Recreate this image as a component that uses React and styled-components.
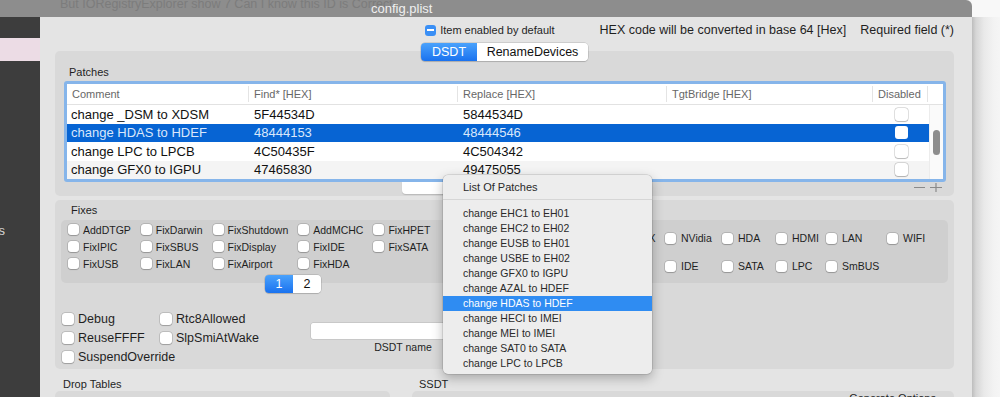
import React from "react";
import styled, { createGlobalStyle } from "styled-components";

const GlobalStyle = createGlobalStyle`
  html, body { margin: 0; padding: 0; background: #f6f6f6; }
  body { font-family: "Liberation Sans", Arial, sans-serif; color: #222; }
  * { box-sizing: border-box; }
`;

const patches = [
  { comment: "change _DSM to XDSM", find: "5F44534D", replace: "5844534D" },
  { comment: "change HDAS to HDEF", find: "48444153", replace: "48444546", selected: true },
  { comment: "change LPC to LPCB", find: "4C50435F", replace: "4C504342" },
  { comment: "change GFX0 to IGPU", find: "47465830", replace: "49475055" },
];

const leftFixes = [
  "AddDTGP", "FixDarwin", "FixShutdown", "AddMCHC", "FixHPET",
  "FixIPIC", "FixSBUS", "FixDisplay", "FixIDE", "FixSATA",
  "FixUSB", "FixLAN", "FixAirport", "FixHDA",
];

const rightFixes = [
  "IntelGFX", "NVidia", "HDA", "HDMI", "LAN", "WIFI",
  "Firewire", "IDE", "SATA", "LPC", "SmBUS",
];

const options = ["Debug", "Rtc8Allowed", "ReuseFFFF", "SlpSmiAtWake", "SuspendOverride"];

const menuItems = [
  "change EHC1 to EH01",
  "change EHC2 to EH02",
  "change EUSB to EH01",
  "change USBE to EH02",
  "change GFX0 to IGPU",
  "change AZAL to HDEF",
  "change HDAS to HDEF",
  "change HECI to IMEI",
  "change MEI to IMEI",
  "change SAT0 to SATA",
  "change LPC to LPCB",
];

const ssdtOptions = [
  { label: "DoubleFirstState", w: 123 },
  { label: "DropOem", w: 82 },
  { label: "EnableC2", w: 101 },
  { label: "EnableC4", w: 80 },
];

const Checkbox = ({ size = 11, gap = 4, fontSize = 10.5, children }) => (
  <CheckItem $gap={gap} $fs={fontSize}>
    <Box $size={size} />
    {children && <span>{children}</span>}
  </CheckItem>
);

const App = () => {
  return (
    <Screen>
      <GlobalStyle />
      <Main>
        <TitleBar>
          <GhostText>But IORegistryExplorer show 7 Can I know this ID is Correct</GhostText>
          <Title>config.plist</Title>
        </TitleBar>
        <Row>
          <Sidebar>
            <SideBand />
            <SideLabel>Devices</SideLabel>
          </Sidebar>
          <WindowBody>
            <TopRow>
              <MixedBox />
              <SmallText>Item enabled by default</SmallText>
              <InfoText $ml={45}>HEX code will be converted in base 64 [Hex]</InfoText>
              <InfoText $ml={14}>Required field (*)</InfoText>
            </TopRow>
            <Segmented>
              <Segment $active $w={56}>DSDT</Segment>
              <Segment $w={111}>RenameDevices</Segment>
            </Segmented>

            <PatchesBox>
              <GroupLabel>Patches</GroupLabel>
              <TableRing>
                <HeaderRow>
                  <HeadCell>Comment</HeadCell>
                  <HeadCell>Find* [HEX]</HeadCell>
                  <HeadCell>Replace [HEX]</HeadCell>
                  <HeadCell>TgtBridge [HEX]</HeadCell>
                  <HeadCell>Disabled</HeadCell>
                  <HeadCell $last />
                </HeaderRow>
                <TableBody>
                  <Rows>
                    {patches.map((p, i) => (
                      <PatchRow key={i} $selected={p.selected} $alt={i % 2 === 1}>
                        <Cell $pl={4}>{p.comment}</Cell>
                        <Cell>{p.find}</Cell>
                        <Cell>{p.replace}</Cell>
                        <Cell />
                        <CheckCell>
                          <Box $size={13} $flat={p.selected} />
                        </CheckCell>
                      </PatchRow>
                    ))}
                  </Rows>
                  <ScrollTrack>
                    <ScrollThumb />
                  </ScrollTrack>
                </TableBody>
              </TableRing>
              <BottomBar>
                <PopupButton />
                <PlusMinus>
                  <svg width="28" height="9" viewBox="0 0 28 9">
                    <path d="M0 4.5h11M16 4.5h12M22 -1.5v11" stroke="#8a8a8a" strokeWidth="1.2" fill="none" />
                  </svg>
                </PlusMinus>
              </BottomBar>
            </PatchesBox>

            <BigBox>
              <GroupLabel $ml={10}>Fixes</GroupLabel>
              <FixesBox>
                <LeftFixes>
                  {leftFixes.map((f) => (
                    <Checkbox key={f}>{f}</Checkbox>
                  ))}
                </LeftFixes>
                <RightFixes>
                  {rightFixes.map((f) => (
                    <Checkbox key={f} gap={5}>{f}</Checkbox>
                  ))}
                </RightFixes>
              </FixesBox>
              <Pager>
                <Segment $active $w={28}>1</Segment>
                <Segment $w={28}>2</Segment>
              </Pager>
              <LowerRow>
                <OptionsGrid>
                  {options.map((o) => (
                    <Checkbox key={o} size={12} gap={4} fontSize={12.5}>{o}</Checkbox>
                  ))}
                </OptionsGrid>
                <FieldGroup>
                  <TextField />
                  <FieldLabel>DSDT name</FieldLabel>
                </FieldGroup>
              </LowerRow>
            </BigBox>

            <SplitRow $mt={9}>
              <GroupLabel $ml={8} $mb={0}>Drop Tables</GroupLabel>
              <GroupLabel $ml={7} $mb={0}>SSDT</GroupLabel>
            </SplitRow>
            <SplitRow>
              <DropBox>
                <WhiteField />
              </DropBox>
              <SsdtBox>
                {ssdtOptions.map((o) => (
                  <SsdtItem key={o.label} $w={o.w}>
                    <Checkbox size={11} gap={5} fontSize={11}>{o.label}</Checkbox>
                  </SsdtItem>
                ))}
                <OptionsTitle>Generate Options</OptionsTitle>
              </SsdtBox>
            </SplitRow>
          </WindowBody>
        </Row>
      </Main>
      <ShadowEdge />

      <Menu>
        <MenuHeader>List Of Patches</MenuHeader>
        <MenuSeparator />
        {menuItems.map((m, i) => (
          <MenuItem key={m} $active={i === 6}>{m}</MenuItem>
        ))}
      </Menu>
    </Screen>
  );
};
export default App;

const Screen = styled.div`
  position: relative;
  width: 1000px;
  height: 397px;
  overflow: hidden;
  display: flex;
`;

const Main = styled.div`
  width: 972px;
  flex: none;
  display: flex;
  flex-direction: column;
`;

const ShadowEdge = styled.div`
  flex: 1;
  background: linear-gradient(#f8f8f8, #f8f8f8) top / 100% 17px no-repeat,
    linear-gradient(to right, #bdbdbd 0px, #d6d6d6 4px, #e9e9e9 12px, #f3f3f3 22px, #f5f5f5);
`;

const TitleBar = styled.div`
  flex: none;
  height: 17px;
  background: #8d8d8d;
  border-top-right-radius: 6px;
  display: grid;
  overflow: hidden;
`;

const GhostText = styled.span`
  grid-area: 1 / 1;
  margin: -3px 0 0 60px;
  font-size: 12.5px;
  color: #7c7c7c;
  white-space: nowrap;
`;

const Title = styled.span`
  grid-area: 1 / 1;
  margin-left: 371px;
  font-size: 13px;
  line-height: 17px;
  color: #f0f0f0;
  white-space: nowrap;
`;

const Row = styled.div`
  flex: 1;
  display: flex;
  min-height: 0;
`;

const Sidebar = styled.div`
  width: 40px;
  flex: none;
  background: #3d3d3d;
  display: flex;
  flex-direction: column;
  overflow: hidden;
  & > * { flex-shrink: 0; }
`;

const SideBand = styled.div`
  height: 23px;
  margin-top: 21px;
  background: #ecdce5;
`;

const SideLabel = styled.div`
  width: 5px;
  margin-top: 162px;
  display: flex;
  justify-content: flex-end;
  overflow: hidden;
  white-space: nowrap;
  font-size: 13px;
  color: #d6d6d6;
`;

const WindowBody = styled.div`
  flex: 1;
  background: #e4e4e4;
  padding: 6px 18px 0 15px;
  display: flex;
  flex-direction: column;
  overflow: hidden;
  & > * { flex-shrink: 0; }
`;

const TopRow = styled.div`
  height: 14px;
  display: flex;
  align-items: center;
  justify-content: flex-end;
  white-space: nowrap;
`;

const MixedBox = styled.span`
  position: relative;
  width: 11px;
  height: 11px;
  border-radius: 3px;
  background: #3a8ff5;
  margin-right: 4px;
  &::after {
    content: "";
    position: absolute;
    left: 2px;
    right: 2px;
    top: 4.5px;
    height: 2px;
    background: #fff;
  }
`;

const SmallText = styled.span`
  font-size: 11px;
  color: #1f1f1f;
`;

const InfoText = styled.span`
  margin-left: ${(p) => p.$ml}px;
  font-size: 12.5px;
  color: #1f1f1f;
`;

const Segmented = styled.div`
  position: relative;
  z-index: 1;
  align-self: center;
  margin-top: 6px;
  display: flex;
  height: 18px;
  border-radius: 4px;
  box-shadow: 0 0 0 0.5px rgba(0, 0, 0, 0.2), 0 1px 1px rgba(0, 0, 0, 0.12);
  overflow: hidden;
`;

const Segment = styled.div`
  width: ${(p) => p.$w}px;
  display: flex;
  align-items: center;
  justify-content: center;
  font-size: 12.5px;
  color: ${(p) => (p.$active ? "#fff" : "#111")};
  background: ${(p) => (p.$active ? "linear-gradient(#4aa2fc, #1a72ef)" : "#fff")};
`;

const PatchesBox = styled.div`
  margin-top: -10px;
  background: #d9d9d9;
  border-radius: 5px;
  padding: 15px 8px 2px 9px;
`;

const GroupLabel = styled.div`
  margin-left: ${(p) => p.$ml || 5}px;
  margin-bottom: ${(p) => (p.$mb === undefined ? 2 : p.$mb)}px;
  font-size: 11px;
  line-height: 12px;
  height: 13px;
  color: #1f1f1f;
`;

const TableRing = styled.div`
  border: 3px solid #86b5ea;
  border-radius: 3px;
  background: #fff;
`;

const cols = "182px 209px 209px 206px 55px";

const HeaderRow = styled.div`
  display: grid;
  grid-template-columns: ${cols} 1fr;
  height: 21px;
  border-bottom: 1px solid #e2e2e2;
`;

const HeadCell = styled.div`
  padding-left: 5px;
  font-size: 11px;
  color: #676767;
  border-right: ${(p) => (p.$last ? "none" : "1px solid #e4e4e4")};
  margin: 2px 0;
  line-height: 16px;
`;

const TableBody = styled.div`
  display: flex;
`;

const Rows = styled.div`
  flex: 1;
`;

const PatchRow = styled.div`
  display: grid;
  grid-template-columns: ${cols};
  height: 18.5px;
  align-items: center;
  font-size: 13px;
  color: ${(p) => (p.$selected ? "#dae7fb" : "#111")};
  background: ${(p) => (p.$selected ? "#0764d3" : p.$alt ? "#f4f4f4" : "#fff")};
`;

const Cell = styled.div`
  padding-left: ${(p) => p.$pl || 5}px;
  white-space: nowrap;
`;

const CheckCell = styled.div`
  display: flex;
  justify-content: center;
  padding-left: 1px;
`;

const ScrollTrack = styled.div`
  width: 14px;
  border-left: 1px solid #ececec;
  background: #fafafa;
`;

const ScrollThumb = styled.div`
  width: 7px;
  height: 25px;
  margin: 25px 0 0 3px;
  border-radius: 4px;
  background: #8d8d8d;
`;

const BottomBar = styled.div`
  height: 12px;
  display: flex;
  align-items: flex-start;
`;

const PopupButton = styled.div`
  margin-left: 338px;
  width: 160px;
  height: 12px;
  background: #fff;
  border-radius: 0 0 4px 4px;
  box-shadow: 0 1px 1px rgba(0, 0, 0, 0.15);
`;

const PlusMinus = styled.div`
  margin: 1px 4px 0 auto;
  display: flex;
`;

const BigBox = styled.div`
  margin-top: 4px;
  background: #d9d9d9;
  border-radius: 5px;
  padding: 4px 6px 3px 6px;
  display: flex;
  flex-direction: column;
  & > * { flex-shrink: 0; }
`;

const FixesBox = styled.div`
  height: 63px;
  margin-top: 1px;
  background: #cfcfcf;
  border-radius: 5px;
  display: grid;
  grid-template-columns: 537px 1fr;
`;

const LeftFixes = styled.div`
  display: grid;
  grid-template-columns: repeat(5, auto);
  justify-content: start;
  align-content: start;
  column-gap: 10px;
  grid-auto-rows: 17px;
  align-items: center;
  padding: 1px 0 0 7px;
`;

const RightFixes = styled.div`
  display: grid;
  grid-template-columns: 67px 57px 54px 50px 61px auto;
  justify-content: start;
  align-content: start;
  grid-auto-rows: 14px;
  row-gap: 14px;
  align-items: center;
  padding-top: 11px;
`;

const CheckItem = styled.label`
  display: flex;
  align-items: center;
  gap: ${(p) => p.$gap}px;
  font-size: ${(p) => p.$fs}px;
  color: #1f1f1f;
  white-space: nowrap;
`;

const Box = styled.span`
  display: inline-block;
  flex: none;
  width: ${(p) => p.$size}px;
  height: ${(p) => p.$size}px;
  border-radius: 3px;
  background: #fff;
  box-shadow: ${(p) =>
    p.$flat
      ? "none"
      : "0 0 0 0.5px rgba(0,0,0,0.22), 0 0.5px 1px rgba(0,0,0,0.18)"};
`;

const Pager = styled.div`
  position: relative;
  align-self: flex-start;
  margin: -8px 0 0 204px;
  height: 18px;
  display: flex;
  border-radius: 4px;
  overflow: hidden;
  box-shadow: 0 0 0 0.5px rgba(0, 0, 0, 0.2), 0 1px 1px rgba(0, 0, 0, 0.12);
`;

const LowerRow = styled.div`
  margin-top: 16px;
  display: grid;
  grid-template-columns: 249px 184px;
  padding-left: 1px;
`;

const OptionsGrid = styled.div`
  display: grid;
  grid-template-columns: 98px auto;
  grid-auto-rows: 19px;
  align-items: center;
`;

const FieldGroup = styled.div`
  padding-top: 14px;
  display: flex;
  flex-direction: column;
`;

const TextField = styled.div`
  height: 16px;
  background: #fff;
  border-radius: 2px;
  box-shadow: 0 0 0 0.5px rgba(0, 0, 0, 0.15);
`;

const FieldLabel = styled.div`
  margin-top: 2px;
  text-align: center;
  font-size: 10.5px;
  line-height: 12px;
  color: #1f1f1f;
`;

const SplitRow = styled.div`
  display: grid;
  grid-template-columns: 335px 542px;
  column-gap: 22px;
  margin-top: ${(p) => p.$mt || 0}px;
`;

const DropBox = styled.div`
  height: 30px;
  background: #d9d9d9;
  border-radius: 5px;
  padding: 6px 5px 0 7px;
`;

const WhiteField = styled.div`
  height: 100%;
  background: #fff;
  border-radius: 2px;
`;

const SsdtBox = styled.div`
  height: 30px;
  background: #d9d9d9;
  border-radius: 5px;
  padding: 6px 18px 0 7px;
  display: flex;
  align-items: flex-start;
`;

const SsdtItem = styled.div`
  width: ${(p) => p.$w}px;
`;

const OptionsTitle = styled.div`
  margin: -5px 0 0 auto;
  font-size: 11px;
  line-height: 12px;
  color: #1f1f1f;
`;

const Menu = styled.div`
  position: absolute;
  left: 443px;
  top: 175px;
  width: 209px;
  height: 199px;
  background: #ededed;
  border-radius: 5px;
  box-shadow: 0 0 0 0.5px rgba(0, 0, 0, 0.18), 0 4px 12px rgba(0, 0, 0, 0.28);
  padding: 5px 0 3.5px;
  display: flex;
  flex-direction: column;
`;

const MenuHeader = styled.div`
  height: 14px;
  line-height: 14px;
  padding-left: 20px;
  font-size: 11px;
  color: #2a2a2a;
`;

const MenuSeparator = styled.div`
  height: 1px;
  margin: 5px 0 5.5px;
  background: #d6d6d6;
`;

const MenuItem = styled.div`
  height: 15px;
  line-height: 15px;
  padding-left: 20px;
  font-size: 10.5px;
  white-space: nowrap;
  color: ${(p) => (p.$active ? "#fff" : "#2a2a2a")};
  background: ${(p) => (p.$active ? "#2f8cf2" : "transparent")};
`;
